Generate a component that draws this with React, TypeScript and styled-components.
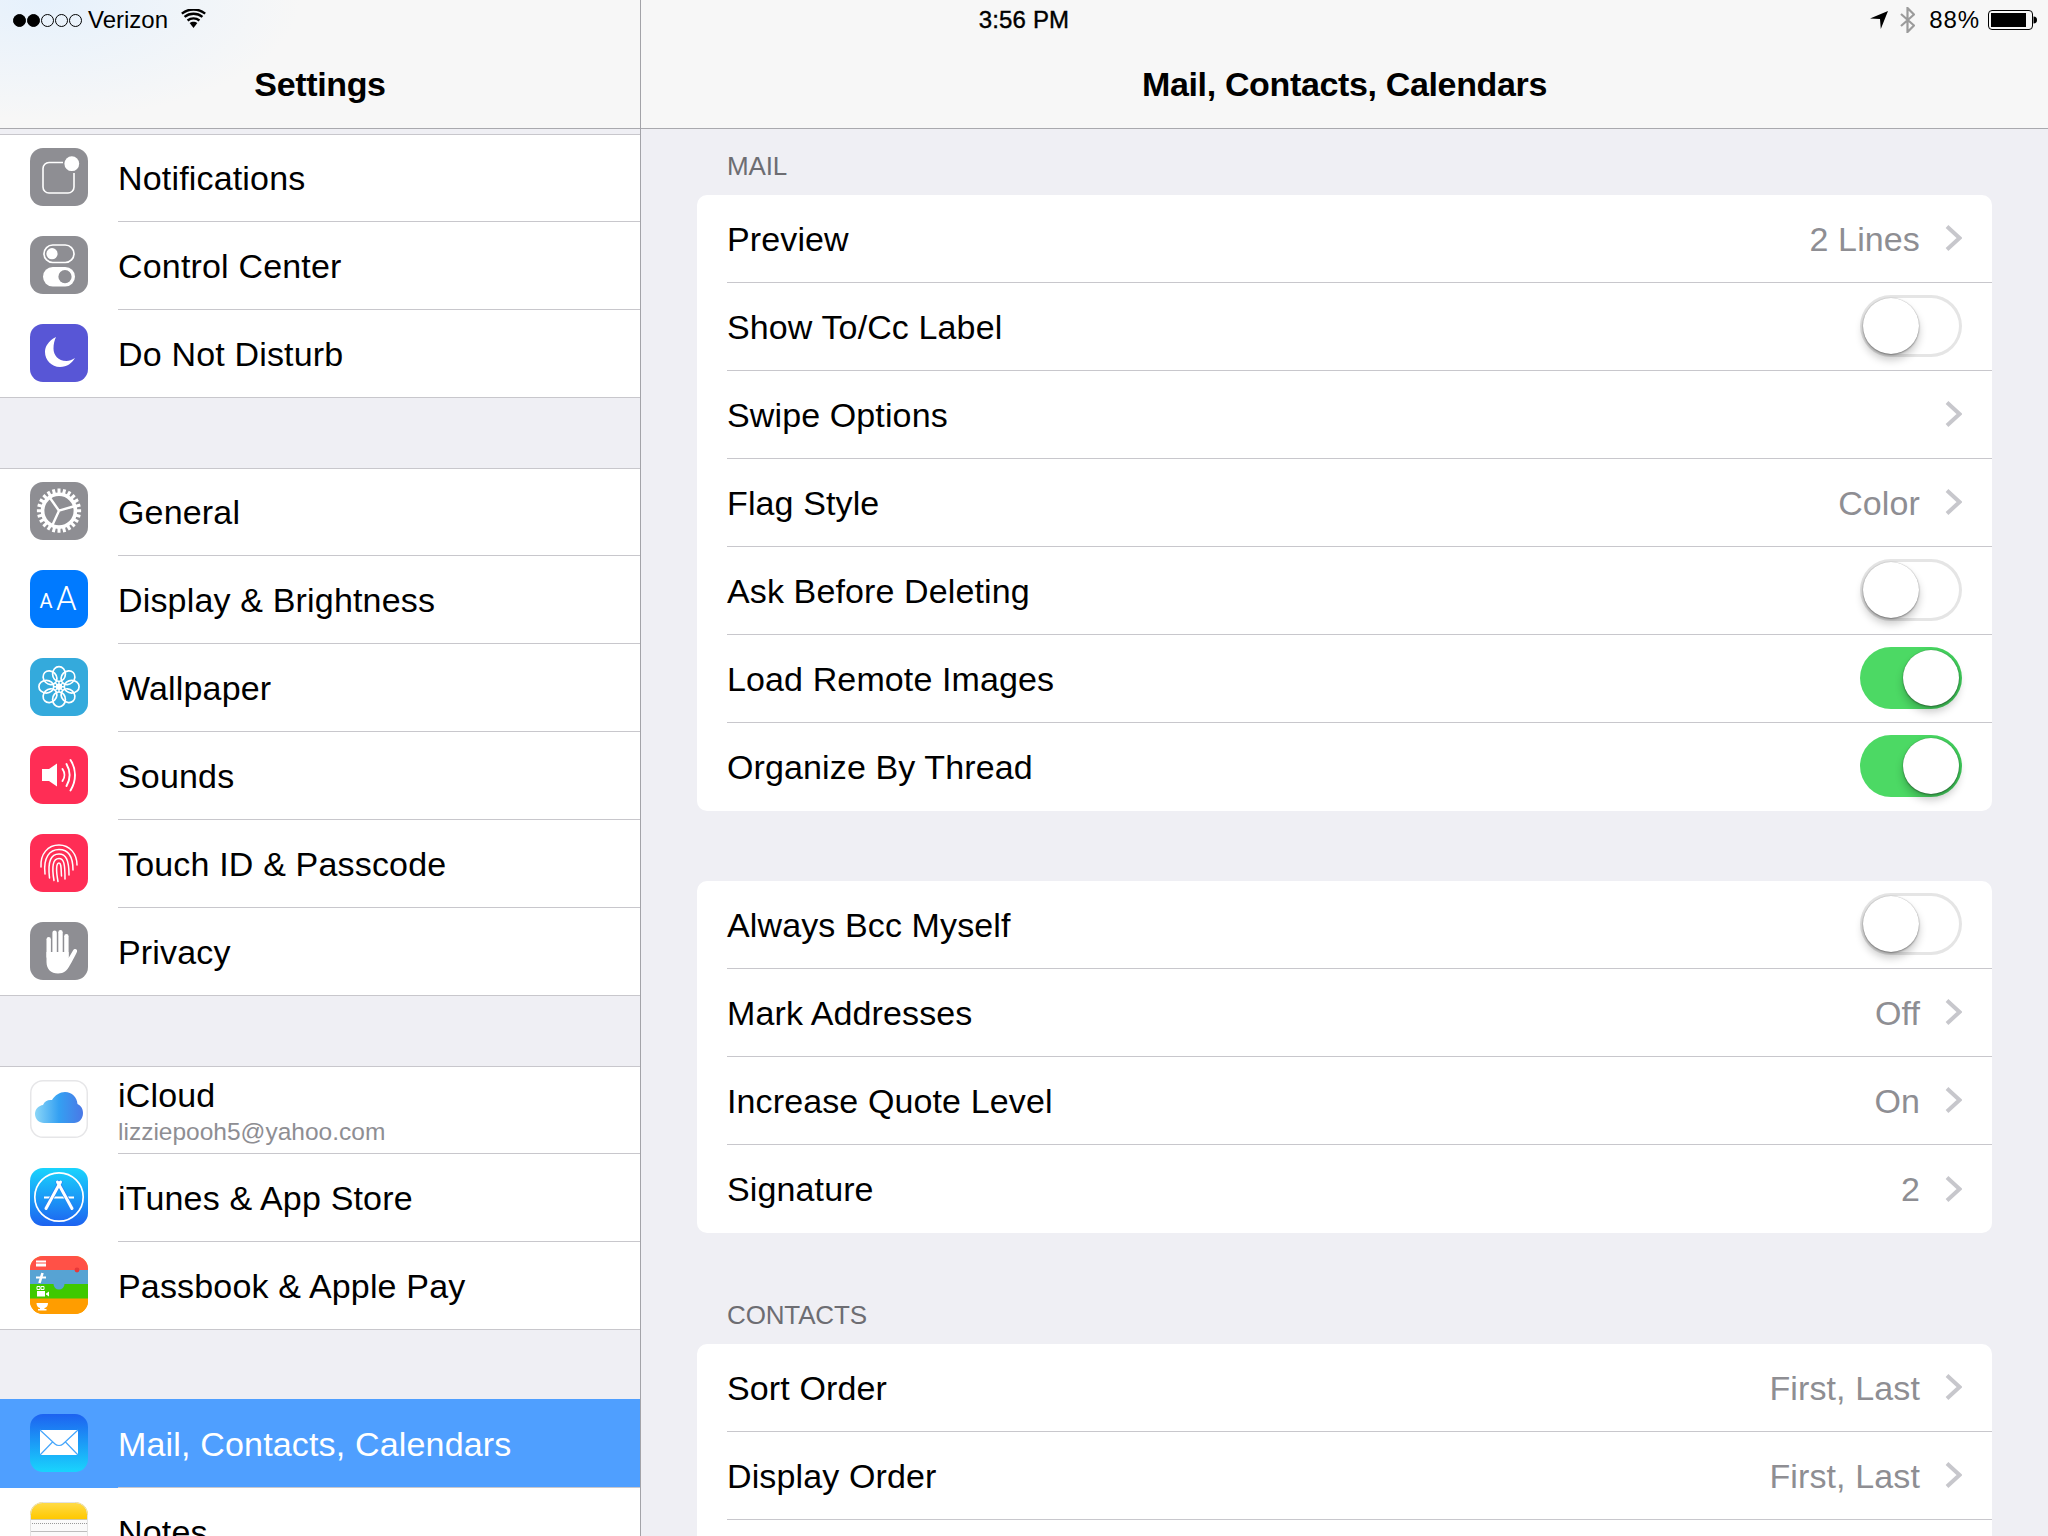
import React from "react";
import styled, { createGlobalStyle } from "styled-components";

const Global = createGlobalStyle`
  html, body { margin: 0; padding: 0; background: #efeff4; }
  body { font-family: "Liberation Sans", Arial, sans-serif; color: #000; }
  * { box-sizing: border-box; }
`;

const Page = styled.div`
  position: relative;
  width: 2048px;
  height: 1536px;
  overflow: hidden;
  display: grid;
  grid-template-columns: 641px 1fr;
  background: #efeff4;
`;

/* ---------- status bar (floats over both nav bars) ---------- */
const StatusBar = styled.div`
  position: absolute;
  inset: 0 0 auto 0;
  height: 40px;
  display: grid;
  grid-template-columns: 1fr auto 1fr;
  align-items: center;
  font-size: 24px;
  line-height: 40px;
`;
const StatusLeft = styled.div`
  display: flex;
  align-items: center;
  padding-left: 13px;
`;
const StatusCenter = styled.div`
  font-weight: 400;
  letter-spacing: 0.15px;
  -webkit-text-stroke: 0.4px #000;
`;
const StatusRight = styled.div`
  display: flex;
  align-items: center;
  justify-content: flex-end;
  padding-right: 11px;
`;
const Dots = styled.div`
  display: flex;
  gap: 1px;
  margin-right: 6px;
`;
const Dot = styled.span<{ $on: boolean }>`
  width: 13px;
  height: 13px;
  border-radius: 50%;
  border: 1.5px solid #000;
  background: ${(p) => (p.$on ? "#000" : "transparent")};
`;
const Carrier = styled.span`
  margin-right: 13px;
`;
const Percent = styled.span`
  margin: 0 8px 0 14px;
  letter-spacing: 0.9px;
`;

/* ---------- panes ---------- */
const Sidebar = styled.aside`
  height: 1536px;
  overflow: hidden;
  border-right: 1px solid #a3a3a8;
`;
const Detail = styled.main`
  height: 1536px;
  overflow: hidden;
`;
const NavBar = styled.header<{ $tint?: boolean }>`
  height: 129px;
  border-bottom: 1px solid #a9a9ae;
  padding-top: 40px;
  display: flex;
  align-items: center;
  justify-content: center;
  background: ${(p) =>
    p.$tint
      ? "radial-gradient(ellipse 260px 120px at 40px 0, #e6f1fc 0%, rgba(247,247,247,0) 100%), #f7f7f7"
      : "#f7f7f7"};
`;
const NavTitle = styled.h1`
  margin: 0;
  font-size: 34px;
  font-weight: 700;
  letter-spacing: -0.35px;
  line-height: 40px;
`;

/* ---------- sidebar list ---------- */
const SideList = styled.div`
  padding-top: 5px;
  display: flex;
  flex-direction: column;
  gap: 70px;
`;
const SideGroup = styled.section`
  background: #fff;
  box-shadow: inset 0 1px 0 #c8c7cc;
`;
const SideRow = styled.div<{ $selected?: boolean; $last?: boolean }>`
  height: 88px;
  display: flex;
  padding-left: 30px;
  border-bottom: ${(p) => (p.$last ? "1px solid #c8c7cc" : "none")};
  background: ${(p) => (p.$selected ? "#4f9fff" : "transparent")};
  box-shadow: ${(p) => (p.$selected ? "0 -1px 0 #4f9fff" : "none")};
  color: ${(p) => (p.$selected ? "#fff" : "#000")};
`;
const Tile = styled.div<{ $bg: string; $border?: boolean }>`
  flex: none;
  width: 58px;
  height: 58px;
  margin: 14px 30px 0 0;
  border-radius: 13px;
  overflow: hidden;
  background: ${(p) => p.$bg};
  box-shadow: ${(p) => (p.$border ? "inset 0 0 0 1.5px #e6e6e8" : "none")};
  svg {
    display: block;
  }
`;
const SideBody = styled.div<{ $line: boolean }>`
  flex: 1;
  display: flex;
  flex-direction: column;
  justify-content: center;
  border-bottom: ${(p) => (p.$line ? "1px solid #c8c7cc" : "none")};
`;
const SideLabel = styled.div`
  font-size: 34px;
  line-height: 40px;
  letter-spacing: 0.17px;
`;
const SideTwoLine = styled.div`
  font-size: 34px;
  line-height: 38px;
  letter-spacing: 0.17px;
  margin-top: 3px;
`;
const SideSub = styled.div`
  font-size: 24.5px;
  line-height: 30px;
  color: #8e8e93;
  margin-top: 3px;
`;

/* ---------- detail list ---------- */
const SectionLabel = styled.div<{ $h: number }>`
  height: ${(p) => p.$h}px;
  padding: 0 0 14px 30px;
  margin: 0 56px 0 56px;
  display: flex;
  align-items: flex-end;
  font-size: 26px;
  line-height: 30px;
  letter-spacing: -0.15px;
  color: #6d6d72;
`;
const Card = styled.section`
  margin: 0 56px;
  background: #fff;
  border-radius: 10px;
  padding-left: 30px;
`;
const DetailRow = styled.div<{ $line: boolean }>`
  height: 88px;
  display: flex;
  align-items: center;
  padding: 0 30px 0 0;
  border-bottom: ${(p) => (p.$line ? "1px solid #c8c7cc" : "none")};
  font-size: 34px;
  letter-spacing: 0.12px;
`;
const RowLabel = styled.span`
  flex: 1;
  padding-top: 1px;
`;
const RowValue = styled.span`
  color: #8e8e93;
  margin-right: 25px;
  padding-top: 1px;
`;
const Chevron = styled.svg`
  flex: none;
  display: block;
  margin-top: -1px;
`;
const CardGap = styled.div`
  height: 70px;
`;
const Toggle = styled.div<{ $on: boolean }>`
  position: relative;
  flex: none;
  width: 102px;
  height: 62px;
  margin-top: -2px;
  border-radius: 31px;
  background: ${(p) =>
    p.$on ? "linear-gradient(90deg, #4cd964 55%, #3fcb5a 100%)" : "#fff"};
  box-shadow: ${(p) => (p.$on ? "none" : "inset 0 0 0 3px #e5e5e5")};
`;
const Knob = styled.div<{ $on: boolean }>`
  position: absolute;
  top: 3px;
  left: ${(p) => (p.$on ? "43px" : "3px")};
  width: 56px;
  height: 56px;
  border-radius: 50%;
  background: #fff;
  box-shadow: 0 6px 8px rgba(0, 0, 0, 0.22), 0 1px 2px rgba(0, 0, 0, 0.35),
    0 0 1px rgba(0, 0, 0, 0.3);
`;

/* ---------- drawings ---------- */
const W = "#fff";
const Ico: React.FC<{ children: React.ReactNode }> = ({ children }) => (
  <svg width="58" height="58" viewBox="0 0 58 58">
    {children}
  </svg>
);

const NotificationsIcon = () => (
  <Ico>
    <path d="M33 14.5H19a6 6 0 0 0-6 6V39a6 6 0 0 0 6 6h19a6 6 0 0 0 6-6V25" fill="none" stroke={W} strokeWidth="1.6" />
    <circle cx="41.8" cy="15.7" r="7.4" fill={W} />
  </Ico>
);
const ControlIcon = () => (
  <Ico>
    <rect x="14" y="9" width="30" height="17.5" rx="8.75" fill="none" stroke={W} strokeWidth="1.7" />
    <circle cx="22" cy="17.7" r="5.6" fill={W} />
    <rect x="13" y="31" width="32" height="19.5" rx="9.75" fill={W} />
    <circle cx="35" cy="40.7" r="6.6" fill="#8e8e93" />
  </Ico>
);
const MoonIcon = () => (
  <Ico>
    <path d="M26 13C18 17 15 23 15 28C15 36 21.5 43 30 43C37 43 42 39 45 34C42 36 39 37 36.5 37C28 37 23.5 31 23.5 24.5C23.5 20 24.5 16 26 13Z" fill={W} />
  </Ico>
);
const GearIcon = () => {
  const teeth = Array.from({ length: 24 }, (_, i) => (i * 360) / 24);
  return (
    <Ico>
      {teeth.map((a) => (
        <line key={a} x1="29" y1="6.6" x2="29" y2="12" stroke={W} strokeWidth="3" transform={`rotate(${a} 29 28.7)`} />
      ))}
      <circle cx="29" cy="28.7" r="16.4" fill="none" stroke={W} strokeWidth="3.6" />
      <path d="M29 28.7L19 14.5M29 28.7L45 24M29 28.7L22 44" stroke={W} strokeWidth="2.4" fill="none" />
    </Ico>
  );
};
const IconText = styled.text<{ $weight: number }>`
  font-family: Roboto, "Liberation Sans", sans-serif;
  font-weight: ${(p) => p.$weight};
  fill: #fff;
`;
const DisplayIcon = () => (
  <Ico>
    <IconText $weight={400} x="9.5" y="38" fontSize="20">A</IconText>
    <IconText $weight={300} x="26" y="40" fontSize="33">A</IconText>
  </Ico>
);
const FlowerIcon = () => {
  const a = Array.from({ length: 8 }, (_, i) => i * 45);
  return (
    <Ico>
      {a.map((r) => (
        <g key={r} transform={`rotate(${r} 29 28.7)`}>
          <ellipse cx="29" cy="16" rx="6.4" ry="7.4" fill="none" stroke={W} strokeWidth="1.7" />
          <line x1="29" y1="28.7" x2="29" y2="23.5" stroke={W} strokeWidth="1.4" />
        </g>
      ))}
      <circle cx="29" cy="28.7" r="3.2" fill={W} />
    </Ico>
  );
};
const SoundIcon = () => (
  <Ico>
    <path d="M12 23H19L27 17.5V40.5L19 35H12Z" fill={W} />
    <path d="M32.5 23C35 26.5 35 31.5 32.5 35M36.5 18C40.5 25 40.5 33 36.5 40M40.5 14C46.5 23 46.5 35 40.5 44.5" fill="none" stroke={W} strokeWidth="1.9" strokeLinecap="round" />
  </Ico>
);
const TouchIcon = () => (
  <Ico>
    <path
      d="M11 33C10 20 18 11 29 11C40 11 47 20 47 31M15 40C13 23 20 15.5 29 15.5C38 15.5 43 22 43 36M19.5 44C17.5 27 21 20 29 20C36 20 39 26 39 41M24 46.5C21.5 32 23 24.5 29 24.5C34 24.5 35 30 35 45M28 47.5C26 37 26 29 29 29C31.5 29 31 35 31.5 42"
      fill="none"
      stroke={W}
      strokeWidth="1.5"
      strokeLinecap="round"
    />
  </Ico>
);
const HandIcon = () => (
  <Ico>
    <rect x="16.5" y="15" width="4.4" height="22" rx="2.2" fill={W} />
    <rect x="22.4" y="8.5" width="4.4" height="26" rx="2.2" fill={W} />
    <rect x="28.3" y="8" width="4.4" height="26" rx="2.2" fill={W} />
    <rect x="34.2" y="12" width="4.4" height="25" rx="2.2" fill={W} />
    <path d="M16.5 30H38.6V36L43 28.5C44.5 26 47.8 27 47 29.8C45 34 42 40 40 43C37.5 48 34 51.5 28 51.5C21 51.5 16.5 47 16.5 40Z" fill={W} />
  </Ico>
);
const CloudIcon = () => (
  <Ico>
    <defs>
      <linearGradient id="cloud" x1="0" y1="0" x2="1" y2="0">
        <stop offset="0" stopColor="#8bd6f7" />
        <stop offset="0.5" stopColor="#34a0f2" />
        <stop offset="1" stopColor="#4a78e6" />
      </linearGradient>
    </defs>
    <path d="M14 43C9 43 5 39 5 34C5 29 9 25.5 13 25C14.5 21 18 19.5 22 20C25 15 30 12 35 12C42 12 47 17 47.5 24C51 25.5 53 29 53 33C53 39 49 43 44 43Z" fill="url(#cloud)" />
  </Ico>
);
const AppStoreIcon = () => (
  <Ico>
    <circle cx="29" cy="29" r="24.2" fill="none" stroke={W} strokeWidth="1.7" />
    <path d="M14 29.5H44" stroke={W} strokeWidth="2.2" />
    <path d="M31 13L15.5 41M27 13L42.5 41" stroke="#2a86f5" strokeWidth="4.6" />
    <path d="M30.5 14L16 40.5M27.5 14L42 40.5" stroke={W} strokeWidth="3" strokeLinecap="round" />
  </Ico>
);
const PassbookIcon = () => (
  <Ico>
    <rect width="58" height="15" fill="#ff5147" />
    <rect y="14" width="58" height="15" fill="#57a3d3" />
    <circle cx="47" cy="14" r="2.4" fill="#e8383a" />
    <rect y="28" width="58" height="15" fill="#3fc900" />
    <circle cx="29" cy="28" r="5.5" fill="#57a3d3" />
    <rect y="42.5" width="58" height="15.5" fill="#ff9d00" />
    <path d="M6 4.5H16V10.5H6Z" fill={W} />
    <path d="M6 7H16" stroke="#ff5147" strokeWidth="1" />
    <path d="M6 21.5H16" stroke={W} strokeWidth="2.2" />
    <path d="M12.5 17L9.5 27" stroke={W} strokeWidth="2.6" />
    <path d="M7 30.5H10V33.5H7ZM11 30.5H14V33.5H11Z" fill="none" stroke={W} strokeWidth="1" />
    <path d="M7 35H15V40.5H7ZM16 37.5L19 35.5V40.5L16 38.5Z" fill={W} />
    <path d="M6.5 47H18C18 50 16.5 51.5 14.5 52V53H16.5V54.5H8V53H10V52C8 51.5 6.5 50 6.5 47Z" fill={W} />
  </Ico>
);
const MailIcon = () => (
  <Ico>
    <rect x="10" y="16" width="38" height="25" fill={W} />
    <path d="M10 16L25 30C27 32 31 32 33 30L48 16M10 41L23 27.5M48 41L35 27.5" fill="none" stroke="#45a6fb" strokeWidth="1.2" />
  </Ico>
);
const NotesIcon = () => (
  <Ico>
    <rect width="58" height="58" fill="#fafafa" />
    <rect width="58" height="17" fill="url(#notes)" />
    <defs>
      <linearGradient id="notes" x1="0" y1="0" x2="0" y2="1">
        <stop offset="0" stopColor="#ffdc4a" />
        <stop offset="1" stopColor="#ffc800" />
      </linearGradient>
    </defs>
    <path d="M0 17.5H58" stroke="#d0c8a8" strokeWidth="1" />
    <path d="M0 21.5H58" stroke="#999" strokeWidth="1" strokeDasharray="1 1" />
    <path d="M0 29.5H58" stroke="#bdbdbd" strokeWidth="1" />
    <rect x="0.5" y="0.5" width="57" height="57" fill="none" stroke="#e2e2e2" rx="12" />
  </Ico>
);

const WifiIcon = () => (
  <svg width="25" height="19" viewBox="0 0 24 18" style={{ marginTop: -3 }}>
    <path d="M12 18L8.3 13.4C10.5 11.6 13.5 11.6 15.7 13.4Z" />
    <path d="M6.3 10.9C9.6 8.2 14.4 8.2 17.7 10.9M3.4 7.5C8.4 3.4 15.6 3.4 20.6 7.5M0.8 4.3C7.3-1 16.7-1 23.2 4.3" fill="none" stroke="#000" strokeWidth="2.3" />
  </svg>
);
const ArrowIcon = () => (
  <svg width="18" height="18" viewBox="0 0 18 18">
    <path d="M0 7.6L18 0L10.8 18L10 8Z" />
  </svg>
);
const BluetoothIcon = () => (
  <svg width="15" height="26" viewBox="0 0 15 26" style={{ marginLeft: 12 }}>
    <path d="M1 7L14 18.5L7.5 25V1L14 7.5L1 19" fill="none" stroke="#9b9b9b" strokeWidth="2.2" />
  </svg>
);
const BatteryIcon = () => (
  <svg width="49" height="20" viewBox="0 0 49 20">
    <rect x="0.5" y="0.5" width="44" height="19" rx="3.5" fill="none" stroke="#000" />
    <rect x="3" y="3" width="35" height="14" fill="#000" />
    <path d="M45.5 6.5C48 6.5 49 8 49 10C49 12 48 13.5 45.5 13.5Z" />
  </svg>
);

/* ---------- data ---------- */
type SideItem = {
  label: string;
  sub?: string;
  bg: string;
  icon: React.ReactNode;
  border?: boolean;
  selected?: boolean;
};
const GREY = "#8e8e93";
const sideGroups: SideItem[][] = [
  [
    { label: "Notifications", bg: GREY, icon: <NotificationsIcon /> },
    { label: "Control Center", bg: GREY, icon: <ControlIcon /> },
    { label: "Do Not Disturb", bg: "#5856d6", icon: <MoonIcon /> },
  ],
  [
    { label: "General", bg: GREY, icon: <GearIcon /> },
    { label: "Display & Brightness", bg: "#007aff", icon: <DisplayIcon /> },
    { label: "Wallpaper", bg: "#34aadc", icon: <FlowerIcon /> },
    { label: "Sounds", bg: "#ff2d55", icon: <SoundIcon /> },
    { label: "Touch ID & Passcode", bg: "#ff2d55", icon: <TouchIcon /> },
    { label: "Privacy", bg: GREY, icon: <HandIcon /> },
  ],
  [
    { label: "iCloud", sub: "lizziepooh5@yahoo.com", bg: "#fff", border: true, icon: <CloudIcon /> },
    { label: "iTunes & App Store", bg: "linear-gradient(180deg, #19d4fd, #1d62f0)", icon: <AppStoreIcon /> },
    { label: "Passbook & Apple Pay", bg: "#ff9d00", icon: <PassbookIcon /> },
  ],
  [
    { label: "Mail, Contacts, Calendars", selected: true, bg: "linear-gradient(180deg, #1d62f0, #19d4fd)", icon: <MailIcon /> },
    { label: "Notes", bg: "#fafafa", icon: <NotesIcon /> },
  ],
];

type DetailItem = { label: string; value?: string; chevron?: boolean; toggle?: boolean };
const cardA: DetailItem[] = [
  { label: "Preview", value: "2 Lines", chevron: true },
  { label: "Show To/Cc Label", toggle: false },
  { label: "Swipe Options", chevron: true },
  { label: "Flag Style", value: "Color", chevron: true },
  { label: "Ask Before Deleting", toggle: false },
  { label: "Load Remote Images", toggle: true },
  { label: "Organize By Thread", toggle: true },
];
const cardB: DetailItem[] = [
  { label: "Always Bcc Myself", toggle: false },
  { label: "Mark Addresses", value: "Off", chevron: true },
  { label: "Increase Quote Level", value: "On", chevron: true },
  { label: "Signature", value: "2", chevron: true },
];
const cardC: DetailItem[] = [
  { label: "Sort Order", value: "First, Last", chevron: true },
  { label: "Display Order", value: "First, Last", chevron: true },
  { label: "" },
];

const DetailCard: React.FC<{ items: DetailItem[] }> = ({ items }) => (
  <Card>
    {items.map((it, i) => (
      <DetailRow key={it.label} $line={i < items.length - 1}>
        <RowLabel>{it.label}</RowLabel>
        {it.value && <RowValue>{it.value}</RowValue>}
        {it.chevron && (
          <Chevron width="17" height="26" viewBox="0 0 17 26">
            <path d="M2 1.5L14.5 13L2 24.5" fill="none" stroke="#c7c7cc" strokeWidth="4" />
          </Chevron>
        )}
        {it.toggle !== undefined && (
          <Toggle $on={it.toggle}>
            <Knob $on={it.toggle} />
          </Toggle>
        )}
      </DetailRow>
    ))}
  </Card>
);

export default function App() {
  return (
    <Page>
      <Global />
      <Sidebar>
        <NavBar $tint>
          <NavTitle>Settings</NavTitle>
        </NavBar>
        <SideList>
          {sideGroups.map((group, gi) => (
            <SideGroup key={gi}>
              {group.map((item, i) => {
                const last = i === group.length - 1;
                return (
                  <SideRow key={item.label} $selected={item.selected} $last={last}>
                    <Tile $bg={item.bg} $border={item.border}>
                      {item.icon}
                    </Tile>
                    <SideBody $line={!last}>
                      {item.sub ? (
                        <>
                          <SideTwoLine>{item.label}</SideTwoLine>
                          <SideSub>{item.sub}</SideSub>
                        </>
                      ) : (
                        <SideLabel>{item.label}</SideLabel>
                      )}
                    </SideBody>
                  </SideRow>
                );
              })}
            </SideGroup>
          ))}
        </SideList>
      </Sidebar>
      <Detail>
        <NavBar>
          <NavTitle>Mail, Contacts, Calendars</NavTitle>
        </NavBar>
        <SectionLabel $h={66}>MAIL</SectionLabel>
        <DetailCard items={cardA} />
        <CardGap />
        <DetailCard items={cardB} />
        <SectionLabel $h={111}>CONTACTS</SectionLabel>
        <DetailCard items={cardC} />
      </Detail>
      <StatusBar>
        <StatusLeft>
          <Dots>
            {[true, true, false, false, false].map((on, i) => (
              <Dot key={i} $on={on} />
            ))}
          </Dots>
          <Carrier>Verizon</Carrier>
          <WifiIcon />
        </StatusLeft>
        <StatusCenter>3:56 PM</StatusCenter>
        <StatusRight>
          <ArrowIcon />
          <BluetoothIcon />
          <Percent>88%</Percent>
          <BatteryIcon />
        </StatusRight>
      </StatusBar>
    </Page>
  );
}
